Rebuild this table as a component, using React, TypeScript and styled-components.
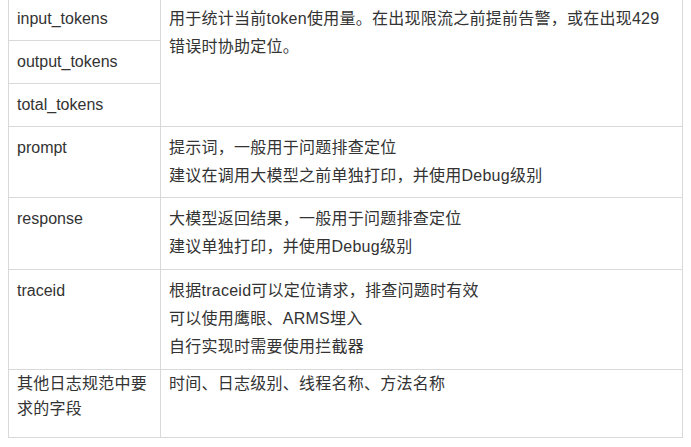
import React from "react";
import styled, { createGlobalStyle } from "styled-components";

const Global = createGlobalStyle`
  html, body { background: #ffffff; }
  body {
    margin: -3px 8px 0 8px;
    font-family: "Liberation Sans", "Noto Sans CJK SC", sans-serif;
    color: #333333;
    -webkit-font-smoothing: antialiased;
  }
`;

const Table = styled.table`
  width: 675px;
  border-collapse: collapse;
  table-layout: fixed;
  font-size: 16px;
`;

const Cell = styled.td<{ $tight?: boolean; $bottom?: number }>`
  border: 1px solid #d9d9d9;
  vertical-align: top;
  padding: ${(p) => (p.$tight ? "1px" : "7px")} 8px
    ${(p) => (p.$bottom ?? 7)}px 8px;
  line-height: ${(p) => (p.$tight ? "25px" : "28px")};
  word-break: break-all;
`;

const Line = styled.div`
  white-space: nowrap;
  letter-spacing: 0.25px;
`;

type Row = { key: string; lines: string[]; bottom?: number };

const rows: Row[] = [
  { key: "prompt", lines: ["提示词，一般用于问题排查定位", "建议在调用大模型之前单独打印，并使用Debug级别"], bottom: 7 },
  { key: "response", lines: ["大模型返回结果，一般用于问题排查定位", "建议单独打印，并使用Debug级别"], bottom: 8 },
  { key: "traceid", lines: ["根据traceid可以定位请求，排查问题时有效", "可以使用鹰眼、ARMS埋入", "自行实现时需要使用拦截器"], bottom: 8 },
];

export default function App() {
  return (
    <>
      <Global />
      <Table>
        <colgroup>
          <col style={{ width: 152 }} />
          <col />
        </colgroup>
        <tbody>
          <tr>
            <Cell>input_tokens</Cell>
            <Cell rowSpan={3}>
              <Line>用于统计当前token使用量。在出现限流之前提前告警，或在出现429</Line>
              <Line>错误时协助定位。</Line>
            </Cell>
          </tr>
          <tr>
            <Cell>output_tokens</Cell>
          </tr>
          <tr>
            <Cell>total_tokens</Cell>
          </tr>
          {rows.map((r) => (
            <tr key={r.key}>
              <Cell $bottom={r.bottom}>{r.key}</Cell>
              <Cell $bottom={r.bottom}>
                {r.lines.map((l) => (
                  <Line key={l}>{l}</Line>
                ))}
              </Cell>
            </tr>
          ))}
          <tr>
            <Cell $tight $bottom={16}>
              <Line>其他日志规范中要</Line>
              <Line>求的字段</Line>
            </Cell>
            <Cell $tight $bottom={16}>
              <Line>时间、日志级别、线程名称、方法名称</Line>
            </Cell>
          </tr>
        </tbody>
      </Table>
    </>
  );
}
